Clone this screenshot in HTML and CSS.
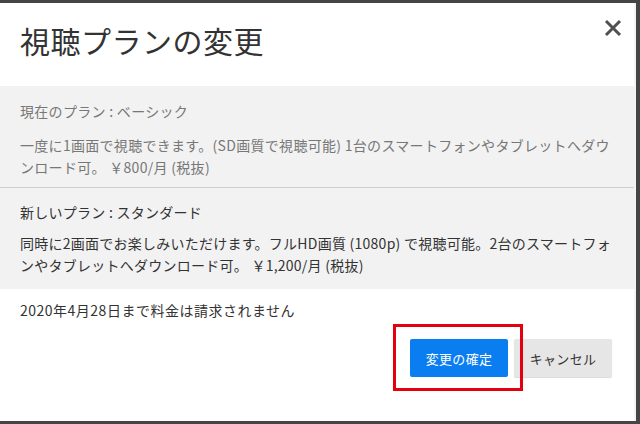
FILE: index.html
```html
<!DOCTYPE html>
<html lang="ja">
<head>
<meta charset="utf-8">
<link rel="stylesheet" href="styles.css">
</head>
<body>
<div class="dialog">
  <div class="header">
    <h1 class="title">視聴プランの変更</h1>
    <button class="close" aria-label="閉じる">
      <svg width="18" height="18" viewBox="0 0 18 18"><path d="M2 2 L16 16 M16 2 L2 16" stroke="#505050" stroke-width="3" stroke-linecap="butt"/></svg>
    </button>
  </div>
  <div class="plan current">
    <div class="plan-name">現在のプラン : ベーシック</div>
    <div class="plan-desc">一度に1画面で視聴できます。(SD画質で視聴可能) 1台のスマートフォンやタブレットへダウ<br>ンロード可。 ￥800/月 (税抜)</div>
  </div>
  <div class="plan next">
    <div class="plan-name">新しいプラン : スタンダード</div>
    <div class="plan-desc">同時に2画面でお楽しみいただけます。フルHD画質 (1080p) で視聴可能。2台のスマートフォ<br>ンやタブレットへダウンロード可。 ￥1,200/月 (税抜)</div>
  </div>
  <div class="note">2020年4月28日まで料金は請求されません</div>
  <div class="actions">
    <div class="confirm-wrap">
      <button class="btn primary">変更の確定</button>
      <div class="highlight"></div>
    </div>
    <button class="btn secondary">キャンセル</button>
  </div>
</div>
</body>
</html>
```

FILE: styles.css
```css
html, body {
  margin: 0;
  padding: 0;
}
body {
  width: 640px;
  height: 424px;
  background: #454545;
  overflow: hidden;
  font-family: "Noto Sans CJK JP", "Noto Sans", sans-serif;
  color: #333;
}
.dialog {
  margin-top: 3px;
  width: 634px;
  height: 418px;
  background: #fff;
  border-right: 2px solid #f4f4f4;
  display: flex;
  flex-direction: column;
}
.header {
  height: 83px;
  padding: 15px 12px 0 20px;
  box-sizing: border-box;
  display: flex;
  justify-content: space-between;
  align-items: flex-start;
}
.title {
  margin: 0;
  font-size: 30px;
  font-weight: 400;
  line-height: 44px;
  color: #333;
  letter-spacing: 0.5px;
}
.close {
  margin-top: 1px;
  border: 0;
  background: none;
  padding: 0;
  width: 18px;
  height: 18px;
  display: flex;
}
.plan {
  background: #f2f2f2;
  padding: 0 14px 0 20px;
  font-size: 14px;
  line-height: 22px;
  letter-spacing: 0.3px;
}
.plan.current {
  padding-top: 14px;
  box-sizing: border-box;
  border-bottom: 1px solid #cfcfcf;
  color: #777;
  height: 102px;
}
.plan.current .plan-desc {
  margin-top: 12px;
}
.plan.next {
  height: 101px;
  padding-top: 13px;
  box-sizing: border-box;
  color: #333;
  letter-spacing: 0.25px;
}
.plan.next .plan-desc {
  margin-top: 9px;
}
.note {
  padding: 10px 20px 0;
  font-size: 14px;
  line-height: 22px;
  color: #333;
  letter-spacing: 0.5px;
}
.actions {
  margin-top: 18px;
  padding-right: 22px;
  display: flex;
  justify-content: flex-end;
  gap: 6px;
}
.confirm-wrap {
  position: relative;
}
.btn {
  width: 98px;
  height: 38px;
  border: 0;
  border-radius: 2px;
  font-family: "Noto Sans CJK JP", sans-serif;
  font-size: 13px;
  padding: 0;
  letter-spacing: 0.3px;
}
.primary {
  background: #0a7df0;
  color: #fff;
}
.secondary {
  background: #e6e6e6;
  color: #333;
  box-shadow: 0 1px 1px rgba(0,0,0,0.15);
}
.highlight {
  position: absolute;
  left: -17px;
  top: -15px;
  width: 130px;
  height: 67px;
  box-sizing: border-box;
  border: 3px solid #e3000f;
  pointer-events: none;
}
```
